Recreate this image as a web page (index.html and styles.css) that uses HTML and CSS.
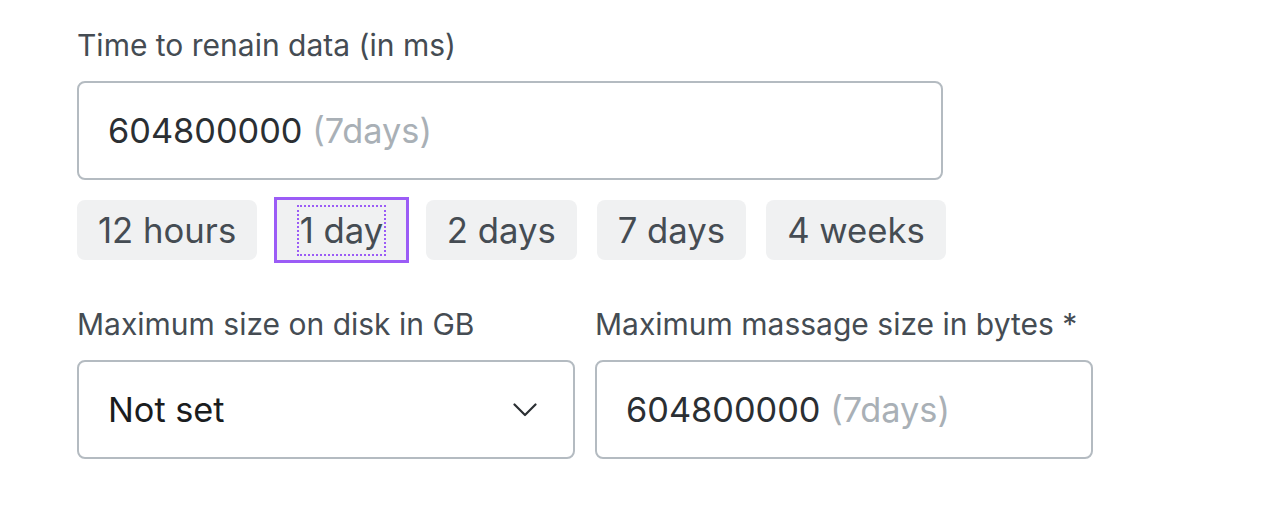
FILE: index.html
```html
<!DOCTYPE html>
<html>
<head>
<meta charset="utf-8">
<link rel="stylesheet" href="styles.css">
</head>
<body>
<div class="form">
  <div class="field">
    <label class="label">Time to renain data (in ms)</label>
    <div class="input wide"><span class="text"><span class="value">604800000</span> <span class="hint">(7days)</span></span></div>
    <div class="chips">
      <button class="chip">12 hours</button>
      <button class="chip focused"><span class="focus-inner">1 day</span></button>
      <button class="chip">2 days</button>
      <button class="chip">7 days</button>
      <button class="chip">4 weeks</button>
    </div>
  </div>
  <div class="row">
    <div class="field col">
      <label class="label">Maximum size on disk in GB</label>
      <div class="input select">
        <span class="select-text">Not set</span>
        <svg class="chevron" width="24" height="14" viewBox="0 0 24 14"><path d="M1.5 1.5 L12 12 L22.5 1.5" fill="none" stroke="#2b2f33" stroke-width="2.2" stroke-linecap="round" stroke-linejoin="round"/></svg>
      </div>
    </div>
    <div class="field col">
      <label class="label">Maximum massage size in bytes *</label>
      <div class="input"><span class="text"><span class="value">604800000</span> <span class="hint">(7days)</span></span></div>
    </div>
  </div>
</div>
</body>
</html>
```
FILE: styles.css
```css
* { box-sizing: border-box; }
body {
  margin: 0;
  background: #ffffff;
  font-family: Inter, "Noto Sans", sans-serif;
}
.form {
  padding: 25px 0 0 77px;
}
.field {
  display: flex;
  flex-direction: column;
}
.label {
  font-size: 30px;
  line-height: 40px;
  color: #454c53;
  margin-bottom: 16px;
}
.input {
  height: 99px;
  border: 2px solid #b4bbc1;
  border-radius: 8px;
  display: flex;
  align-items: center;
  padding: 0 29px;
  font-size: 34.3px;
}
.text { white-space: pre; }
.input.wide { width: 866px; }
.value { color: #2b2f33; }
.hint { color: #a9b0b6; }
.chips {
  display: flex;
  gap: 20px;
  margin-top: 20px;
}
.chip {
  height: 60px;
  padding: 0 21px;
  border: none;
  border-radius: 8px;
  background: #f0f1f2;
  font-family: Inter, "Noto Sans", sans-serif;
  font-size: 34.7px;
  color: #454c53;
  display: flex;
  align-items: center;
}
.chip.focused {
  border-radius: 0;
  padding: 0 22.5px;
  outline: 3px solid #9b5cf6;
  outline-offset: 0;
}
.focus-inner {
  border: 2px dotted #9b5cf6;
  padding: 0 1px;
  margin: 0 -3px;
  line-height: 47px;
}
.row {
  display: flex;
  gap: 20px;
  margin-top: 44px;
}
.col { width: 498px; }
.select {
  justify-content: space-between;
}
.select-text { color: #1a1c1e; }
.chevron { margin-right: 7px; }
```
